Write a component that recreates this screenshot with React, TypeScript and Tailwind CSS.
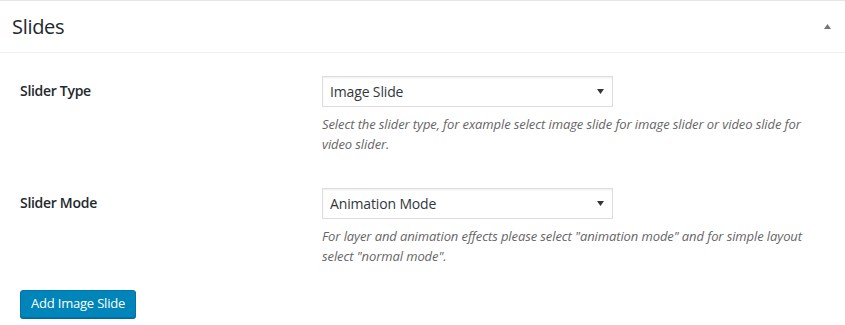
import React from "react";

const font = { fontFamily: '"Open Sans", "Noto Sans", Arial, sans-serif' };

function SelectBox({ value }: { value: string }) {
  return (
    <div className="flex h-[31px] w-[291px] items-center justify-between border border-[#ddd] bg-white pl-[7px] pr-[7px] text-[14px] tracking-[-0.15px] text-[#32373c] shadow-[inset_0_1px_2px_rgba(0,0,0,0.07)]">
      <span>{value}</span>
      <svg width="7" height="5" viewBox="0 0 7 5" className="mr-[1px]">
        <path d="M0 0 H7 L3.5 5 Z" fill="#32373c" />
      </svg>
    </div>
  );
}

function FieldRow({
  label,
  value,
  lines,
}: {
  label: string;
  value: string;
  lines: string[];
}) {
  return (
    <div className="flex">
      <div className="w-[302px] pt-[4px] text-[14px] font-semibold tracking-[-0.3px] text-[#23282d]">{label}</div>
      <div>
        <SelectBox value={value} />
        <p className="mt-[7px] text-[13px] leading-[20px] tracking-[-0.1px] italic text-[#666]">
          {lines.map((l, i) => (
            <React.Fragment key={i}>
              {i > 0 && <br />}
              {l}
            </React.Fragment>
          ))}
        </p>
      </div>
    </div>
  );
}

export default function App() {
  return (
    <div className="h-[325px] w-[845px] overflow-hidden bg-white" style={font}>
      <div className="border-t border-[#e5e5e5]">
        <div className="flex h-[52px] items-center justify-between border-b border-[#eee] pl-[12px] pr-[14px]">
          <h2 className="text-[20px] font-normal tracking-[-0.3px] text-[#23282d]">Slides</h2>
          <svg width="7" height="5" viewBox="0 0 7 5">
            <path d="M3.5 0 L7 5 H0 Z" fill="#72777c" />
          </svg>
        </div>
        <div className="pl-[20px] pt-[23px]">
          <FieldRow
            label="Slider Type"
            value="Image Slide"
            lines={[
              "Select the slider type, for example select image slide for image slider or video slide for",
              "video slider.",
            ]}
          />
          <div className="mt-[34px]">
            <FieldRow
              label="Slider Mode"
              value="Animation Mode"
              lines={[
                'For layer and animation effects please select "animation mode" and for simple layout',
                'select "normal mode".',
              ]}
            />
          </div>
          <button className="mt-[24px] h-[28px] rounded-[3px] border border-[#0073aa] bg-[#0085ba] px-[10px] text-[13px] tracking-[-0.2px] text-white shadow-[0_1px_0_#006799]">
            Add Image Slide
          </button>
        </div>
      </div>
    </div>
  );
}
